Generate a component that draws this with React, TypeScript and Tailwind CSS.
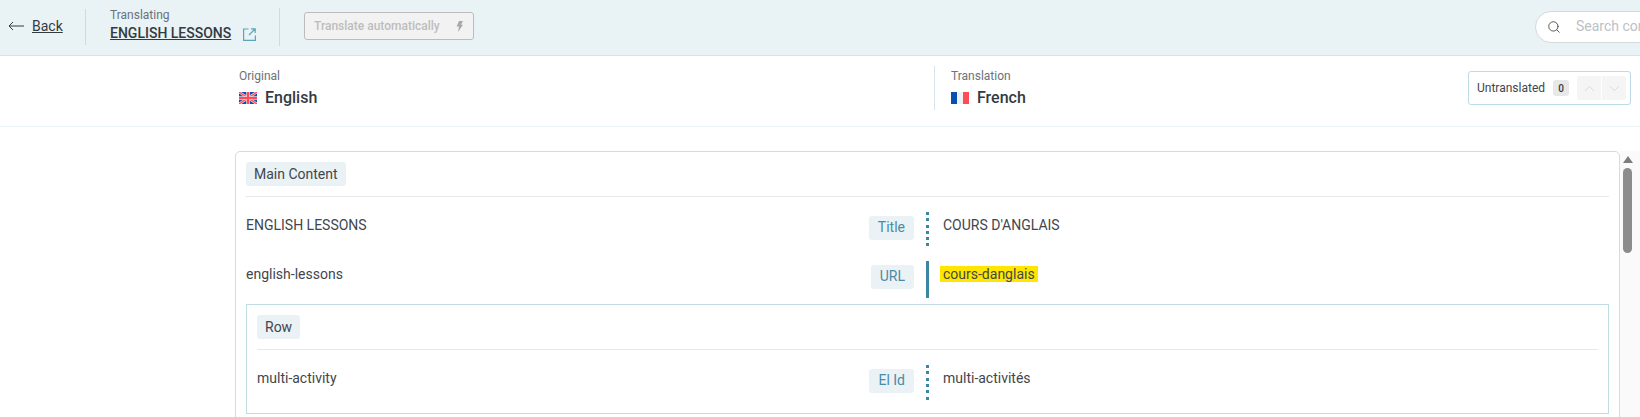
import React from 'react'
import { ChevronDown, ChevronUp, Search } from 'lucide-react'

function UkFlag() {
  return (
    <svg width="18" height="12" viewBox="0 0 18 12" className="shrink-0">
      <rect width="18" height="12" fill="#0a4fb0" />
      <path d="M0 0L18 12M18 0L0 12" stroke="#f6d5d9" strokeWidth="2.6" />
      <path d="M0 0L18 12M18 0L0 12" stroke="#ff4b55" strokeWidth="1.2" />
      <path d="M9 0V12M0 6H18" stroke="#f6d5d9" strokeWidth="3.6" />
      <path d="M9 0V12M0 6H18" stroke="#ff4b55" strokeWidth="2.2" />
    </svg>
  )
}

function FrFlag() {
  return (
    <div className="flex h-3 w-[18px] shrink-0">
      <div className="w-[6px] bg-[#0a4fb0]" />
      <div className="w-[6px] bg-[#eef2f5]" />
      <div className="w-[6px] bg-[#ff4b55]" />
    </div>
  )
}

function Chip({ children }: { children: React.ReactNode }) {
  return <span className="flex h-6 w-fit items-center rounded-[3px] bg-[#eaf2f5] px-2 text-[14px] text-[#3f464e]">{children}</span>
}

function Field({ source, label, value, solid, highlight, h, w }: { source: string; label: string; value: string; solid?: boolean; highlight?: boolean; h: string; w: string }) {
  return (
    <div className={`flex ${h}`}>
      <div className="flex-1 pt-[3px] text-[14px] leading-5 text-[#3f464e]">{source}</div>
      <div className="mt-[4px] flex h-6 items-center rounded-[3px] bg-[#eaf2f5] px-[9px] pb-px text-[14px] text-[#4a8ba6]">{label}</div>
      <div className={`ml-3 w-[3px] ${solid ? 'h-[37px] bg-[#3b87a3]' : 'h-[38px] bg-[repeating-linear-gradient(to_bottom,#3b87a3_0,#3b87a3_3px,transparent_3px,transparent_6.3px)]'}`} />
      <div className={`${w} pl-[14px] pt-[3px] text-[14px] leading-5 text-[#3f464e]`}>
        {highlight ? <span className="-ml-[3px] bg-[#ffe600] pl-[3px] pr-[3px]">{value}</span> : value}
      </div>
    </div>
  )
}

export default function App() {
  return (
    <div className="flex h-[417px] w-[1640px] flex-col overflow-hidden bg-white font-['Roboto',sans-serif] text-[#333a42]">
      {/* top bar */}
      <div className="flex h-[56px] shrink-0 items-center border-b border-[#d5e3e9] bg-[#e9f2f5]">
        <div className="-mt-[3px] flex w-[85px] items-center pl-[8px] text-[#333a42]">
          <svg width="16" height="10" viewBox="0 0 16 10" fill="none" stroke="currentColor" strokeWidth="1">
            <path d="M16 5H1M5 1L1 5L5 9" />
          </svg>
          <span className="ml-2 text-[14px] underline">Back</span>
        </div>
        <div className="-mt-[2px] h-9 w-px bg-[#c9dde5]" />
        <div className="-mt-[5px] w-[193px] pl-[24px]">
          <div className="text-[12px] leading-[14px] text-[#6b7278]">Translating</div>
          <div className="mt-[2px] flex items-center">
            <span className="whitespace-nowrap text-[14px] font-medium leading-[18px] underline">ENGLISH LESSONS</span>
            <svg width="13" height="13" viewBox="0 0 13 13" fill="none" stroke="#5da4ba" strokeWidth="1.2" className="ml-[12px] mt-[3px]">
              <path d="M5.5 1H0.6V12.4H12.4V7.5M6 7L12 1M8 0.8H12.2V5" />
            </svg>
          </div>
        </div>
        <div className="-mt-[2px] h-[38px] w-px bg-[#c9dde5]" />
        <div className="-mt-[3px] ml-6 flex h-7 w-[170px] items-center justify-between rounded-[3px] border border-[#bcbcbc] bg-[#f2f2f2] pl-[9px] pr-[10px] text-[12px] font-medium text-[#bdbdbd]">
          Translate automatically
          <svg width="7" height="11" viewBox="0 0 7 11" fill="#a8a8a8"><path d="M3 0H7L5 3.8H7L2 11L3 5.6H0.6Z" /></svg>
        </div>
        <div className="-mt-[2px] ml-auto flex h-[32px] w-[200px] shrink-0 translate-x-[95px] items-center rounded-full border border-[#d4d9dc] bg-white pl-[11px] text-[14px] text-[#bcc1c5]">
          <Search size={14} strokeWidth={1.5} className="text-[#444]" />
          <span className="ml-[15px]">Search content</span>
        </div>
      </div>

      {/* language header */}
      <div className="flex h-[71px] shrink-0 items-center border-b border-[#e9f2f5] pl-[239px]">
        <div className="-mt-[5px] w-[695px]">
          <div className="text-[12px] leading-[14px] text-[#6b7278]">Original</div>
          <div className="mt-[5px] flex items-center gap-2">
            <UkFlag />
            <span className="text-[16px] font-medium leading-5">English</span>
          </div>
        </div>
        <div className="-mt-[6px] h-[44px] w-px bg-[#d5e6ea]" />
        <div className="-mt-[5px] w-[533px] pl-4">
          <div className="text-[12px] leading-[14px] text-[#6b7278]">Translation</div>
          <div className="mt-[5px] flex items-center gap-2">
            <FrFlag />
            <span className="text-[16px] font-medium leading-5">French</span>
          </div>
        </div>
        <div className="-mt-[6px] flex h-[34px] w-[163px] items-center rounded-[3px] border border-[#bcdbe6] pl-[8px] pr-[4px]">
          <span className="w-[68px] whitespace-nowrap text-[12px] text-[#3f464e]">Untranslated</span>
          <span className="ml-2 flex h-4 w-4 items-center justify-center rounded-[3px] bg-[#e8e8e8] text-[10px] font-medium">0</span>
          <div className="ml-2 flex h-6 w-6 items-center justify-center rounded-l-[3px] bg-[#f5f5f5] text-[#cfcfcf]"><ChevronUp size={17} strokeWidth={1} /></div>
          <div className="ml-px flex h-6 w-6 items-center justify-center rounded-r-[3px] bg-[#f5f5f5] text-[#cfcfcf]"><ChevronDown size={17} strokeWidth={1} /></div>
        </div>
      </div>

      {/* content */}
      <div className="flex min-h-0 flex-1 pl-[235px] pt-[24px]">
        <div className="h-[300px] w-[1385px] shrink-0 rounded-t-[5px] border border-[#dadada] px-[10px] pt-[10px]">
          <Chip>Main Content</Chip>
          <div className="mb-[15px] mt-[10px] h-px w-full bg-[#e8e8e8]" />
          <Field h="h-[49px]" w="w-[680px]" source="ENGLISH LESSONS" label="Title" value="COURS D'ANGLAIS" />
          <Field h="h-[43px]" w="w-[680px]" source="english-lessons" label="URL" value="cours-danglais" solid highlight />
          <div className="h-[110px] border border-[#c2dce3] px-[10px] pt-[10px]">
            <Chip>Row</Chip>
            <div className="mb-[15px] mt-[10px] h-px w-full bg-[#e8e8e8]" />
            <Field h="h-[49px]" w="w-[669px]" source="multi-activity" label="El Id" value="multi-activités" />
          </div>
        </div>
        <div className="flex w-5 shrink-0 flex-col items-center bg-[#fafafa] pr-[5px] pt-[5px]">
          <div className="h-0 w-0 border-x-[5px] border-b-[7px] border-x-transparent border-b-[#7d7d7d]" />
          <div className="mt-[5px] h-[85px] w-[9px] rounded-full bg-[#8c8c8c]" />
        </div>
      </div>
    </div>
  )
}
